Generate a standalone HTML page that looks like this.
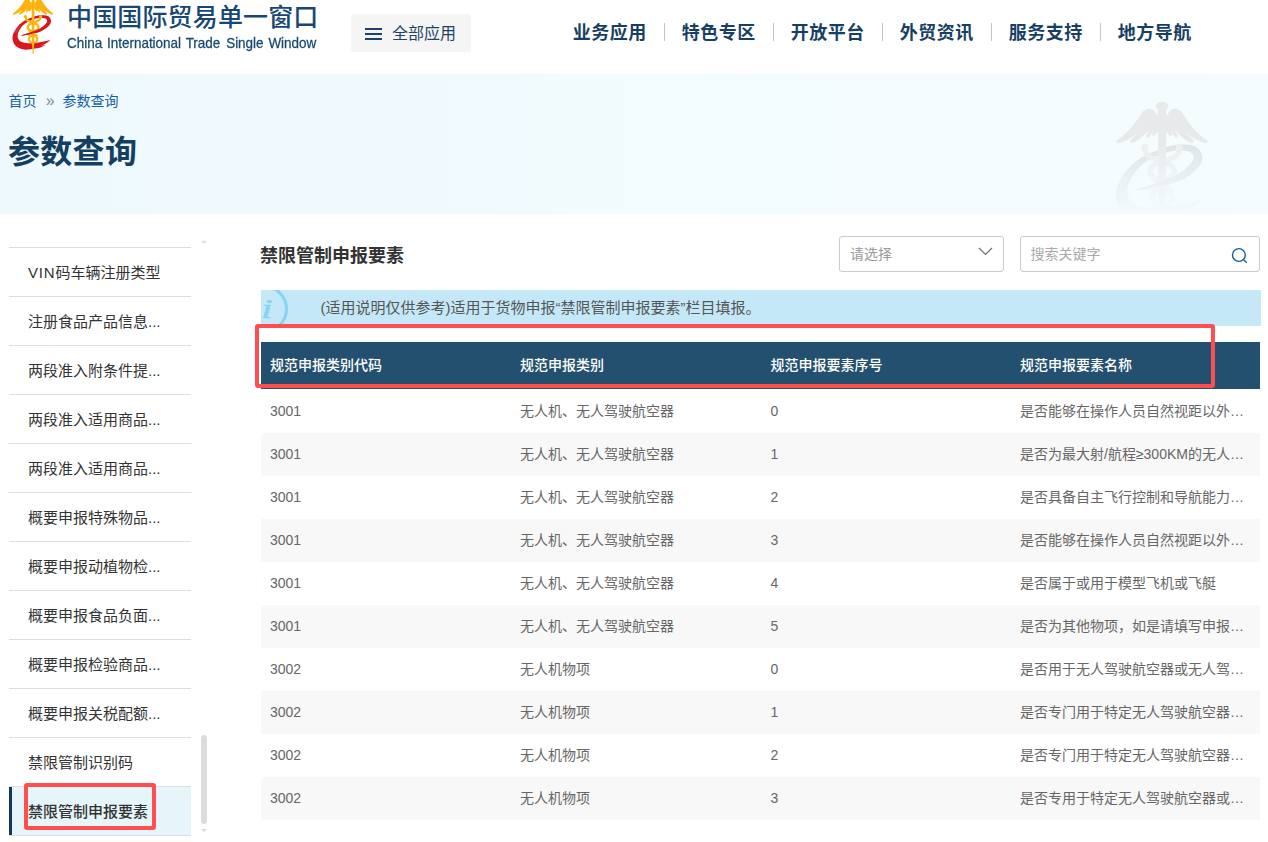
<!DOCTYPE html>
<html lang="zh-CN">
<head>
<meta charset="utf-8">
<title>参数查询 - 中国国际贸易单一窗口</title>
<style>
*{box-sizing:border-box;margin:0;padding:0}
html,body{width:1268px;height:842px;overflow:hidden;background:#fff}
body{font-family:"Liberation Sans","Noto Sans CJK SC",sans-serif;font-size:14px;color:#666;position:relative}
ul{list-style:none}
a{text-decoration:none;color:inherit}

/* ---------- header ---------- */
.header{position:absolute;left:0;top:0;width:1268px;height:74px;background:#fff}
.logo{position:absolute;left:4px;top:0;width:60px;height:60px}
.brand-cn{position:absolute;left:67px;top:-1px;height:36px;line-height:36px;font-size:25px;font-weight:500;color:#174874;white-space:nowrap;letter-spacing:.15px}
.brand-en{position:absolute;left:67px;top:35px;height:16px;line-height:16px;font-size:13.5px;color:#174874;white-space:nowrap;word-spacing:1.1px;transform:scaleY(1.06);transform-origin:0 0;-webkit-text-stroke:.25px #174874;letter-spacing:-.02px}
.allapps{position:absolute;left:351px;top:14px;width:120px;height:38px;background:#f5f5f5;border-radius:3px;color:#1d4468;font-size:16px;line-height:39px}
.allapps .bars{position:absolute;left:14px;top:14px;width:17px;height:12px}
.allapps .bars i{position:absolute;left:0;width:17px;height:2px;background:#1d4468}
.allapps span.t{position:absolute;left:41px;top:0}
.nav{position:absolute;left:555px;top:15px;height:36px;display:flex}
.nav li{width:109px;height:36px;line-height:36px;text-align:center;font-size:18px;font-weight:bold;color:#183f63;position:relative;letter-spacing:.5px;text-indent:.5px}
.nav li+li:before{content:"";position:absolute;left:0;top:8px;width:1px;height:18px;background:#b9c6d3}

/* ---------- hero ---------- */
.hero{position:absolute;left:0;top:74px;width:1268px;height:140px;background:linear-gradient(90deg,#eef9fe 0%,#f2fbfe 50%,#f5fcfe 100%)}
.crumb{position:absolute;left:8.4px;top:17px;height:20px;line-height:20px;font-size:14px;color:#1560a3;white-space:nowrap}
.crumb .sep{display:inline-block;width:26px;text-align:center;color:#858b92;font-size:16px;text-indent:1.5px;vertical-align:top}
.hero h1{position:absolute;left:8px;top:54px;height:48px;line-height:48px;font-size:32px;font-weight:bold;color:#153f60;white-space:nowrap;letter-spacing:.3px}
.wm{position:absolute;left:1090px;top:24px;width:130px;height:116px}

/* ---------- sidebar ---------- */
.side{position:absolute;left:9px;top:247px;width:182px}
.side li{height:49px;border-top:1px solid #d9e0e9;line-height:50px;padding-left:19px;font-size:15px;color:#333;white-space:nowrap;position:relative}
.side li.on{height:50px;background:#e6f5fa;font-weight:500;border-bottom:1px solid #d9e0e9}
.side li.on:before{content:"";position:absolute;left:0;top:0;width:3px;height:48px;background:#14365f}
.sb-up,.sb-dn{position:absolute;left:201px;width:0;height:0;border-left:3px solid transparent;border-right:3px solid transparent}
.sb-up{top:240px;border-bottom:3px solid #e2e2e2}
.sb-dn{top:829px;border-top:3px solid #dcdcdc}
.sb-thumb{position:absolute;left:201px;top:735px;width:6px;height:89px;border-radius:3px;background:#dcdcdc}

/* ---------- main ---------- */
.title{position:absolute;left:260px;top:242px;height:28px;line-height:28px;font-size:18px;font-weight:bold;color:#333;white-space:nowrap}
.sel{position:absolute;left:839px;top:236px;width:165px;height:36px;border:1px solid #ccc;border-radius:3px;background:#fff;line-height:34px;padding-left:10px;color:#999;font-size:14px}
.sel svg{position:absolute;right:10px;top:10px}
.search{position:absolute;left:1020px;top:236px;width:240px;height:36px;border:1px solid #ccc;border-radius:3px;background:#fff;line-height:34px;padding-left:9.6px;color:#aaa;font-size:14px}
.search svg{position:absolute;right:11px;top:10px}
.info{position:absolute;left:261px;top:290px;width:1000px;height:36px;background:#c5e8f8;overflow:hidden;line-height:36px;font-size:15px;color:#555;padding-left:59.5px;white-space:nowrap}
.info .ic{position:absolute;left:-21.2px;top:-5.5px;width:48px;height:48px;border:3px solid #88d3f4;border-radius:50%}
.info .ii{position:absolute;left:-1.5px;top:1px;width:14px;text-align:center;font:italic 27px/36px "Liberation Serif",serif;color:#88d3f4;transform:scaleX(1.55);transform-origin:50% 50%;-webkit-text-stroke:.5px #88d3f4}

table{position:absolute;left:261px;top:342px;width:999px;border-collapse:separate;border-spacing:0;table-layout:fixed}
th{height:48px;border-bottom:1px solid #fff;background:#24506f;color:#fff;font-size:14px;font-weight:500;text-align:left;padding:0 0 3px 10px;white-space:nowrap}
th:first-child,td:first-child{width:249px;padding-left:9px}
td{height:43px;padding:0 0 2px 10px;font-size:14px;color:#666;white-space:nowrap;overflow:hidden;text-overflow:ellipsis}
tbody tr:nth-child(even) td{background:#f8f8f8}
th:nth-child(3),td:nth-child(3){padding-left:10.5px}
td.e{padding-right:14px}
td.c{padding-bottom:4px}

.mark{position:absolute;border:4px solid #fd4f50;border-radius:3px;pointer-events:none}
</style>
</head>
<body>

<div class="header">
  <svg class="logo" width="60" height="60" viewBox="0 0 842 842"><g fill="#d9151d"><path d="M245 498 L250 497 L257 497 L264 496 L273 495 L282 494 L292 492 L302 491 L312 490 L322 488 L332 487 L342 485 L352 484 L362 482 L372 480 L383 478 L393 476 L404 474 L414 472 L425 470 L435 467 L445 464 L455 462 L464 459 L474 456 L484 452 L493 449 L503 445 L512 442 L521 438 L530 433 L539 429 L547 425 L555 420 L563 415 L571 410 L579 405 L587 400 L594 394 L601 389 L607 383 L614 377 L620 371 L626 365 L632 358 L638 351 L643 344 L648 336 L653 328 L656 319 L659 310 L659 300 L659 291 L658 282 L655 273 L652 265 L648 257 L643 250 L638 243 L632 237 L625 231 L617 226 L609 223 L601 220 L593 218 L584 216 L575 215 L567 214 L558 213 L549 213 L541 213 L532 213 L523 213 L513 214 L504 215 L494 216 L485 218 L475 219 L465 221 L456 223 L446 225 L436 228 L427 231 L417 234 L408 237 L398 241 L389 244 L380 248 L371 252 L362 256 L353 259 L344 263 L336 267 L327 271 L319 275 L310 279 L302 283 L293 288 L285 292 L277 297 L269 303 L261 308 L253 314 L246 319 L238 325 L231 332 L223 338 L216 345 L209 351 L203 358 L196 365 L190 372 L184 379 L178 387 L172 394 L166 402 L161 410 L156 419 L151 427 L146 436 L142 444 L138 453 L135 461 L131 470 L128 479 L125 489 L123 499 L121 509 L119 519 L119 530 L119 541 L121 551 L122 562 L125 572 L128 583 L132 593 L137 604 L142 614 L149 625 L156 634 L165 644 L175 652 L185 660 L196 666 L207 672 L218 677 L230 682 L241 686 L253 689 L265 692 L277 694 L289 696 L302 697 L314 697 L327 696 L339 695 L351 693 L362 692 L373 690 L384 688 L395 686 L406 683 L417 681 L428 678 L438 675 L449 672 L459 668 L469 665 L479 661 L488 658 L498 654 L507 650 L516 647 L525 643 L534 639 L542 635 L550 631 L558 626 L566 622 L574 618 L581 614 L589 609 L597 604 L605 599 L612 594 L619 589 L626 584 L632 579 L638 575 L643 571 L646 569 L644 563 L639 564 L634 566 L627 567 L619 569 L611 571 L603 573 L594 575 L585 577 L577 579 L569 580 L560 582 L552 584 L544 585 L535 587 L527 589 L518 590 L509 592 L500 593 L491 595 L482 596 L473 597 L463 599 L453 600 L443 601 L434 603 L424 604 L414 605 L404 605 L395 606 L385 606 L375 607 L365 607 L355 607 L345 607 L335 606 L326 606 L317 605 L308 604 L301 603 L293 602 L286 600 L277 598 L269 596 L261 593 L253 590 L246 588 L240 585 L234 582 L229 579 L225 576 L221 574 L218 570 L214 566 L211 562 L207 557 L204 552 L201 546 L199 540 L196 535 L195 529 L193 524 L192 519 L192 514 L191 508 L192 501 L192 494 L193 487 L195 480 L196 473 L198 466 L200 459 L202 452 L205 445 L209 438 L212 430 L216 423 L220 416 L224 409 L229 402 L234 395 L239 388 L244 382 L249 375 L254 369 L260 362 L266 356 L272 350 L278 344 L285 339 L291 333 L298 328 L305 324 L312 319 L319 315 L327 310 L334 306 L342 302 L350 298 L359 294 L367 291 L375 287 L384 283 L393 279 L401 276 L410 272 L419 269 L428 266 L437 263 L445 261 L454 259 L463 257 L472 255 L480 254 L489 252 L498 251 L507 251 L516 250 L524 250 L532 250 L539 251 L547 252 L554 253 L561 254 L568 256 L574 258 L580 260 L585 262 L590 264 L593 267 L595 269 L597 271 L599 274 L601 277 L603 281 L604 285 L605 288 L606 292 L606 295 L606 298 L605 300 L605 302 L604 306 L602 310 L599 314 L596 319 L592 325 L587 330 L583 336 L578 342 L573 347 L568 352 L562 357 L557 362 L551 367 L545 373 L538 378 L531 382 L524 387 L517 392 L510 397 L503 401 L495 405 L487 409 L478 414 L470 418 L461 422 L452 426 L443 429 L434 433 L425 437 L416 440 L406 444 L397 447 L387 451 L377 454 L367 457 L357 460 L347 463 L337 466 L328 469 L319 472 L309 475 L299 478 L290 481 L280 484 L271 486 L263 489 L256 491 L250 493 L245 494Z"/><path d="M350 658 L354 659 L360 661 L367 664 L375 666 L384 669 L393 672 L402 674 L412 677 L421 678 L430 679 L439 679 L447 679 L456 678 L464 677 L473 676 L481 675 L489 673 L497 671 L505 669 L513 667 L520 664 L528 661 L536 657 L544 654 L551 650 L558 646 L565 643 L570 639 L575 637 L579 635 L577 631 L573 632 L568 633 L561 634 L554 635 L547 637 L539 638 L531 640 L523 641 L515 642 L507 643 L500 644 L492 645 L485 646 L477 647 L469 648 L461 649 L453 649 L445 650 L438 651 L430 651 L422 651 L414 652 L405 652 L396 652 L386 652 L377 652 L369 652 L362 652 L355 652 L350 652Z"/></g><g fill="none" stroke="#fff" stroke-linecap="round"><path d="M146 452 Q162 398 204 356" stroke-width="5"/><path d="M170 458 Q184 412 222 372" stroke-width="3"/></g><g fill="none" stroke="#fdb30b" stroke-width="33" stroke-linecap="round"><path d="M303 238 C296 300 370 300 408 322 C446 300 520 300 513 238"/><ellipse cx="409" cy="380" rx="76" ry="53"/><ellipse cx="409" cy="550" rx="59" ry="50" stroke-width="29"/><path d="M350 430 L465 500 M465 430 L350 500" stroke-width="24"/></g><g fill="#fdb30b"><circle cx="301" cy="232" r="22"/><circle cx="515" cy="232" r="22"/></g><g fill="#fdb30b"><path d="M388 -10 L428 -10 L424 600 L414 755 L402 755 L392 600Z"/><path d="M392 30 L372 30 C368 10 355 -5 335 -10 C318 -12 300 -5 287 8 C240 90 180 155 122 192 L130 207 C180 195 225 170 268 132 L206 192 L218 206 C262 188 296 160 326 122 L308 162 L324 174 L352 128 L342 152 L360 160 L392 120 Z"/><path d="M392 30 L372 30 C368 10 355 -5 335 -10 C318 -12 300 -5 287 8 C240 90 180 155 122 192 L130 207 C180 195 225 170 268 132 L206 192 L218 206 C262 188 296 160 326 122 L308 162 L324 174 L352 128 L342 152 L360 160 L392 120 Z" transform="translate(816 0) scale(-1 1)"/><ellipse cx="408" cy="-27" rx="40" ry="27"/></g><path fill="#d9151d" d="M245 496 C330 470 420 440 500 405 L530 430 C440 465 340 488 245 500Z"/></svg>
  <div class="brand-cn">中国国际贸易单一窗口</div>
  <div class="brand-en">China International Trade <span style="margin-left:1px">Single Window</span></div>
  <div class="allapps"><span class="bars"><i style="top:0"></i><i style="top:5px"></i><i style="top:10px"></i></span><span class="t">全部应用</span></div>
  <ul class="nav">
    <li>业务应用</li><li>特色专区</li><li>开放平台</li><li>外贸资讯</li><li>服务支持</li><li>地方导航</li>
  </ul>
</div>

<div class="hero">
  <div class="crumb"><a>首页</a><span class="sep">»</span><a>参数查询</a></div>
  <h1>参数查询</h1>
  <svg class="wm" width="130" height="116" viewBox="0 0 130 116"><defs><linearGradient id="wmf" x1="0" y1="0" x2="0" y2="1"><stop offset="0" stop-color="#fff"/><stop offset=".38" stop-color="#fff"/><stop offset="1" stop-color="#000"/></linearGradient><mask id="wmm" maskUnits="userSpaceOnUse" x="0" y="0" width="130" height="116"><rect width="130" height="116" fill="url(#wmf)"/></mask></defs><g mask="url(#wmm)"><g transform="translate(6.5 12.3) scale(.1605)"><g fill="#dfe3e5"><path d="M245 498 L250 497 L257 497 L264 496 L273 495 L282 494 L292 492 L302 491 L312 490 L322 488 L332 487 L342 485 L352 484 L362 482 L372 480 L383 478 L393 476 L404 474 L414 472 L425 470 L435 467 L445 464 L455 462 L464 459 L474 456 L484 452 L493 449 L503 445 L512 442 L521 438 L530 433 L539 429 L547 425 L555 420 L563 415 L571 410 L579 405 L587 400 L594 394 L601 389 L607 383 L614 377 L620 371 L626 365 L632 358 L638 351 L643 344 L648 336 L653 328 L656 319 L659 310 L659 300 L659 291 L658 282 L655 273 L652 265 L648 257 L643 250 L638 243 L632 237 L625 231 L617 226 L609 223 L601 220 L593 218 L584 216 L575 215 L567 214 L558 213 L549 213 L541 213 L532 213 L523 213 L513 214 L504 215 L494 216 L485 218 L475 219 L465 221 L456 223 L446 225 L436 228 L427 231 L417 234 L408 237 L398 241 L389 244 L380 248 L371 252 L362 256 L353 259 L344 263 L336 267 L327 271 L319 275 L310 279 L302 283 L293 288 L285 292 L277 297 L269 303 L261 308 L253 314 L246 319 L238 325 L231 332 L223 338 L216 345 L209 351 L203 358 L196 365 L190 372 L184 379 L178 387 L172 394 L166 402 L161 410 L156 419 L151 427 L146 436 L142 444 L138 453 L135 461 L131 470 L128 479 L125 489 L123 499 L121 509 L119 519 L119 530 L119 541 L121 551 L122 562 L125 572 L128 583 L132 593 L137 604 L142 614 L149 625 L156 634 L165 644 L175 652 L185 660 L196 666 L207 672 L218 677 L230 682 L241 686 L253 689 L265 692 L277 694 L289 696 L302 697 L314 697 L327 696 L339 695 L351 693 L362 692 L373 690 L384 688 L395 686 L406 683 L417 681 L428 678 L438 675 L449 672 L459 668 L469 665 L479 661 L488 658 L498 654 L507 650 L516 647 L525 643 L534 639 L542 635 L550 631 L558 626 L566 622 L574 618 L581 614 L589 609 L597 604 L605 599 L612 594 L619 589 L626 584 L632 579 L638 575 L643 571 L646 569 L644 563 L639 564 L634 566 L627 567 L619 569 L611 571 L603 573 L594 575 L585 577 L577 579 L569 580 L560 582 L552 584 L544 585 L535 587 L527 589 L518 590 L509 592 L500 593 L491 595 L482 596 L473 597 L463 599 L453 600 L443 601 L434 603 L424 604 L414 605 L404 605 L395 606 L385 606 L375 607 L365 607 L355 607 L345 607 L335 606 L326 606 L317 605 L308 604 L301 603 L293 602 L286 600 L277 598 L269 596 L261 593 L253 590 L246 588 L240 585 L234 582 L229 579 L225 576 L221 574 L218 570 L214 566 L211 562 L207 557 L204 552 L201 546 L199 540 L196 535 L195 529 L193 524 L192 519 L192 514 L191 508 L192 501 L192 494 L193 487 L195 480 L196 473 L198 466 L200 459 L202 452 L205 445 L209 438 L212 430 L216 423 L220 416 L224 409 L229 402 L234 395 L239 388 L244 382 L249 375 L254 369 L260 362 L266 356 L272 350 L278 344 L285 339 L291 333 L298 328 L305 324 L312 319 L319 315 L327 310 L334 306 L342 302 L350 298 L359 294 L367 291 L375 287 L384 283 L393 279 L401 276 L410 272 L419 269 L428 266 L437 263 L445 261 L454 259 L463 257 L472 255 L480 254 L489 252 L498 251 L507 251 L516 250 L524 250 L532 250 L539 251 L547 252 L554 253 L561 254 L568 256 L574 258 L580 260 L585 262 L590 264 L593 267 L595 269 L597 271 L599 274 L601 277 L603 281 L604 285 L605 288 L606 292 L606 295 L606 298 L605 300 L605 302 L604 306 L602 310 L599 314 L596 319 L592 325 L587 330 L583 336 L578 342 L573 347 L568 352 L562 357 L557 362 L551 367 L545 373 L538 378 L531 382 L524 387 L517 392 L510 397 L503 401 L495 405 L487 409 L478 414 L470 418 L461 422 L452 426 L443 429 L434 433 L425 437 L416 440 L406 444 L397 447 L387 451 L377 454 L367 457 L357 460 L347 463 L337 466 L328 469 L319 472 L309 475 L299 478 L290 481 L280 484 L271 486 L263 489 L256 491 L250 493 L245 494Z"/><path d="M350 658 L354 659 L360 661 L367 664 L375 666 L384 669 L393 672 L402 674 L412 677 L421 678 L430 679 L439 679 L447 679 L456 678 L464 677 L473 676 L481 675 L489 673 L497 671 L505 669 L513 667 L520 664 L528 661 L536 657 L544 654 L551 650 L558 646 L565 643 L570 639 L575 637 L579 635 L577 631 L573 632 L568 633 L561 634 L554 635 L547 637 L539 638 L531 640 L523 641 L515 642 L507 643 L500 644 L492 645 L485 646 L477 647 L469 648 L461 649 L453 649 L445 650 L438 651 L430 651 L422 651 L414 652 L405 652 L396 652 L386 652 L377 652 L369 652 L362 652 L355 652 L350 652Z"/></g><g fill="none" stroke="#eef1f3" stroke-linecap="round"><path d="M146 452 Q162 398 204 356" stroke-width="5"/><path d="M170 458 Q184 412 222 372" stroke-width="3"/></g><g fill="none" stroke="#eceef0" stroke-width="33" stroke-linecap="round"><path d="M303 238 C296 300 370 300 408 322 C446 300 520 300 513 238"/><ellipse cx="409" cy="380" rx="76" ry="53"/><ellipse cx="409" cy="550" rx="59" ry="50" stroke-width="29"/><path d="M350 430 L465 500 M465 430 L350 500" stroke-width="24"/></g><g fill="#eceef0"><circle cx="301" cy="232" r="22"/><circle cx="515" cy="232" r="22"/></g><g fill="#e8e9eb"><path d="M382 -10 L434 -10 L430 600 L414 755 L402 755 L386 600Z"/><path d="M392 30 L372 30 C368 10 355 -5 335 -10 C318 -12 300 -5 287 8 C240 90 180 155 122 192 L130 207 C180 195 225 170 268 132 L206 192 L218 206 C262 188 296 160 326 122 L308 162 L324 174 L352 128 L342 152 L360 160 L392 120 Z"/><path d="M392 30 L372 30 C368 10 355 -5 335 -10 C318 -12 300 -5 287 8 C240 90 180 155 122 192 L130 207 C180 195 225 170 268 132 L206 192 L218 206 C262 188 296 160 326 122 L308 162 L324 174 L352 128 L342 152 L360 160 L392 120 Z" transform="translate(816 0) scale(-1 1)"/><ellipse cx="408" cy="-27" rx="40" ry="27"/></g><path fill="#dfe3e5" d="M245 496 C330 470 420 440 500 405 L530 430 C440 465 340 488 245 500Z"/></g></g></svg>
</div>

<ul class="side">
  <li><span style="letter-spacing:.8px">VIN</span>码车辆注册类型</li>
  <li>注册食品产品信息...</li>
  <li>两段准入附条件提...</li>
  <li>两段准入适用商品...</li>
  <li>两段准入适用商品...</li>
  <li>概要申报特殊物品...</li>
  <li>概要申报动植物检...</li>
  <li>概要申报食品负面...</li>
  <li>概要申报检验商品...</li>
  <li>概要申报关税配额...</li>
  <li>禁限管制识别码</li>
  <li class="on">禁限管制申报要素</li>
</ul>
<div class="sb-up"></div><div class="sb-thumb"></div><div class="sb-dn"></div>

<div class="title">禁限管制申报要素</div>
<div class="sel">请选择<svg width="15" height="9" viewBox="0 0 15 9"><path d="M1 1l6.5 6.4L14 1" fill="none" stroke="#707070" stroke-width="1.2"/></svg></div>
<div class="search">搜索关键字<svg width="17" height="17" viewBox="0 0 17 17"><circle cx="7.9" cy="8" r="6.4" fill="none" stroke="#125ea1" stroke-width="1.4"/><path d="M12.6 12.8l3.2 3" stroke="#125ea1" stroke-width="1.4" fill="none"/></svg></div>

<div class="info"><span class="ic"></span><span class="ii">i</span>(适用说明仅供参考)适用于货物申报“禁限管制申报要素”栏目填报。</div>

<table>
  <thead><tr><th>规范申报类别代码</th><th>规范申报类别</th><th>规范申报要素序号</th><th>规范申报要素名称</th></tr></thead>
  <tbody>
    <tr><td>3001</td><td class="c">无人机、无人驾驶航空器</td><td>0</td><td class="e c">是否能够在操作人员自然视距以外…</td></tr>
    <tr><td>3001</td><td class="c">无人机、无人驾驶航空器</td><td>1</td><td class="e c">是否为最大射/航程≥300KM的无人…</td></tr>
    <tr><td>3001</td><td class="c">无人机、无人驾驶航空器</td><td>2</td><td class="e c">是否具备自主飞行控制和导航能力…</td></tr>
    <tr><td>3001</td><td class="c">无人机、无人驾驶航空器</td><td>3</td><td class="e c">是否能够在操作人员自然视距以外…</td></tr>
    <tr><td>3001</td><td class="c">无人机、无人驾驶航空器</td><td>4</td><td class="e c">是否属于或用于模型飞机或飞艇</td></tr>
    <tr><td>3001</td><td class="c">无人机、无人驾驶航空器</td><td>5</td><td class="e c">是否为其他物项，如是请填写申报…</td></tr>
    <tr><td>3002</td><td class="c">无人机物项</td><td>0</td><td class="e c">是否用于无人驾驶航空器或无人驾…</td></tr>
    <tr><td>3002</td><td class="c">无人机物项</td><td>1</td><td class="e c">是否专门用于特定无人驾驶航空器…</td></tr>
    <tr><td>3002</td><td class="c">无人机物项</td><td>2</td><td class="e c">是否专门用于特定无人驾驶航空器…</td></tr>
    <tr><td>3002</td><td class="c">无人机物项</td><td>3</td><td class="e c">是否专用于特定无人驾驶航空器或…</td></tr>
  </tbody>
</table>

<div class="mark" style="left:255px;top:324px;width:960px;height:64px"></div>
<div class="mark" style="left:24px;top:783px;width:132px;height:47px"></div>

</body>
</html>
